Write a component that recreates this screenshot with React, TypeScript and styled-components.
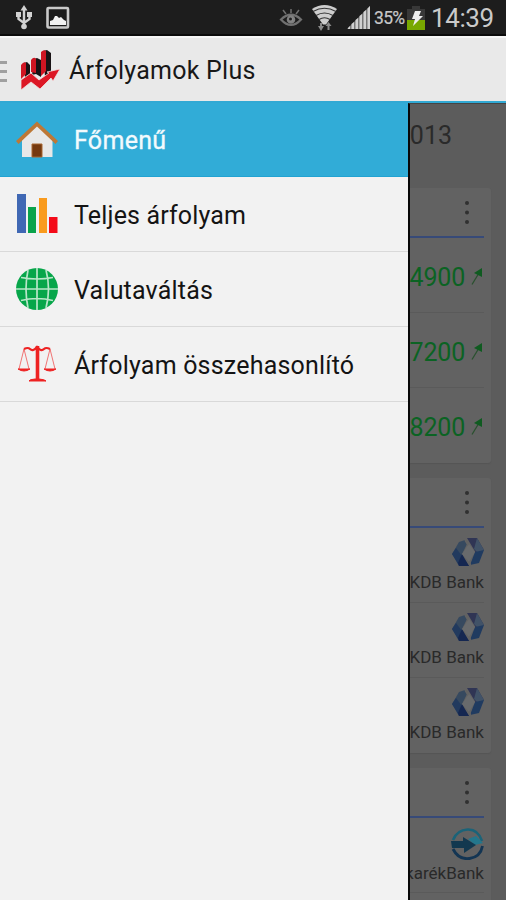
import React from "react";
import styled, { createGlobalStyle } from "styled-components";

const GlobalStyle = createGlobalStyle`
  body { margin: 0; background: #f2f2f2; font-family: Roboto, sans-serif; }
  *, *::before, *::after { box-sizing: border-box; }
  svg { display: block; flex: none; }
`;

const Screen = styled.div`
  width: 506px;
  height: 900px;
  display: flex;
  flex-direction: column;
  overflow: hidden;
`;

const StatusBar = styled.header`
  height: 36px;
  flex: none;
  display: flex;
  align-items: center;
  justify-content: space-between;
  padding: 0 12px 0 15px;
  background: #1d1d1d;
  border-bottom: 2px solid #0b0b0b;
`;

const StatusGroup = styled.div`
  display: flex;
  align-items: center;
  height: 34px;
  padding-top: 2px;
`;

const Gap = styled.span<{ $w: number }>`
  width: ${(p) => p.$w}px;
  flex: none;
`;

const Battery = styled.span`
  width: 31px;
  font-size: 17.5px;
  letter-spacing: -0.7px;
  color: #c8c8c8;
  -webkit-text-stroke: 0.2px #c8c8c8;
  line-height: 34px;
  white-space: nowrap;
`;

const Clock = styled.span`
  width: 63px;
  font-size: 26px;
  letter-spacing: -0.4px;
  color: #cacaca;
  line-height: 34px;
  white-space: nowrap;
`;

const ActionBar = styled.div`
  height: 65px;
  flex: none;
  display: flex;
  align-items: center;
  background: #e9e9e9;
  border-top: 2px solid #f6f6f6;
`;

const Handle = styled.div`
  width: 7px;
  height: 21px;
  display: flex;
  flex-direction: column;
  justify-content: space-between;
  margin: 3px 14px 0 0;
`;

const HandleLine = styled.span`
  height: 3px;
  background: #a0a0a0;
`;

const Title = styled.h1`
  margin: 2px 0 0 8px;
  font-size: 25px;
  font-weight: 400;
  letter-spacing: 0.25px;
  line-height: 32px;
  color: #181818;
`;

const Body = styled.div`
  flex: 1;
  display: flex;
  min-height: 0;
  border-top: 2px solid #31a9d4;
`;

const Drawer = styled.nav`
  width: 408px;
  flex: none;
  background: #f2f2f2;
`;

const MenuItem = styled.div<{ $active?: boolean }>`
  height: ${(p) => (p.$active ? 74 : 75)}px;
  display: flex;
  align-items: center;
  padding: 0 16px;
  border-bottom: ${(p) => (p.$active ? "1px solid #22a3d2" : "1px solid #d9d9d9")};
  background: ${(p) => (p.$active ? "#31acd7" : "transparent")};
  color: ${(p) => (p.$active ? "#f3fafd" : "#141414")};
  -webkit-text-stroke: ${(p) => (p.$active ? "0.3px #f3fafd" : "0")};
  font-size: 25px;
  line-height: 32px;
`;

const MenuLabel = styled.span<{ $spacing: number }>`
  margin: 3px 0 0 16px;
  letter-spacing: ${(p) => p.$spacing}px;
`;

const Content = styled.main`
  flex: 1;
  overflow: hidden;
  background: #5c5c5c;
  border-left: 2px solid #080808;
  border-top: 1px solid #454545;
`;

const DateLine = styled.div`
  height: 84px;
  padding: 16px 54px 0 0;
  display: flex;
  justify-content: flex-end;
  font-size: 25px;
  line-height: 32px;
  color: #2a2a2a;
`;

const Card = styled.section`
  width: 81px;
  margin-bottom: 15px;
  padding-right: 7px;
  background: #626262;
  border-radius: 0 3px 3px 0;
  box-shadow: 0 1px 1px #555555;
`;

const CardHeader = styled.div`
  height: 50px;
  display: flex;
  justify-content: flex-end;
  padding: 12px 15px 0 0;
  border-bottom: 2px solid #374a78;
`;

const CardRow = styled.div`
  height: 75px;
  display: flex;
  justify-content: flex-end;
  border-bottom: 1px solid #5a5a5a;
  &:last-child { border-bottom-color: transparent; }
`;

const Rate = styled.div`
  display: flex;
  align-items: center;
  gap: 6px;
  padding: 4px 1px 0 0;
  font-size: 25px;
  letter-spacing: -0.2px;
  color: #0b6323;
`;

const Bank = styled.div`
  flex: none;
  display: flex;
  flex-direction: column;
  align-items: flex-end;
  padding-top: 10px;
  font-size: 17px;
  line-height: 20px;
  color: #292929;
  white-space: nowrap;
`;

const BankName = styled.span<{ $top: number }>`
  margin-top: ${(p) => p.$top}px;
`;

const UsbIcon = () => (
  <svg width="18" height="26" viewBox="0 0 18 26" fill="none" stroke="#d2d2d2" strokeWidth="2.400">
    <path d="M9 3v19M3.500 9v5l5.500 4 5.500-4V9" />
    <path d="M9 0l3.500 5.500h-7z" fill="#d2d2d2" stroke="none" />
    <circle cx="9" cy="21.500" r="2.800" fill="#d2d2d2" stroke="none" />
    <path d="M1 7h5v5H1zM12 7h5v5h-5z" fill="#d2d2d2" stroke="none" />
  </svg>
);

const PictureIcon = () => (
  <svg width="24" height="24" viewBox="0 0 24 24">
    <rect x="1.500" y="2" width="20.500" height="19.500" rx="1" fill="#1b1b1b" stroke="#c9c9c9" strokeWidth="2.600" />
    <path d="M4 19v-4l3-1 2-4h2l2 2 2-1 3 3 2 1v4z" fill="#f2f2f2" />
  </svg>
);

const EyeIcon = () => (
  <svg width="24" height="20" viewBox="0 0 24 20" fill="none" stroke="#707070" strokeWidth="2.200">
    <path d="M2 11.500q10-9.500 20 0q-10 11-20 0z" />
    <circle cx="12" cy="11.500" r="3.200" fill="#8b8b8b" stroke="#808080" />
    <path d="M12 1v4M4 2l3 4M20 2l-3 4" strokeWidth="1.500" />
    <circle cx="11.500" cy="11" r="1.500" fill="#222" stroke="none" />
  </svg>
);

const WifiIcon = () => (
  <svg width="25" height="27" viewBox="0 0 25 27" fill="none">
    <path d="M0 4q12.500-8 25 0L14 19.500h-3z" fill="#cecece" />
    <path d="M1 6.500q11.500-6.500 23 0M4 10.500q8.500-5 17 0M7 14.500q5.500-3.500 11 0" stroke="#353535" strokeWidth="1.100" />
    <path d="M9 18v6M16.500 25v-6" stroke="#8a8a8a" strokeWidth="2" />
    <path d="M6 21h6l-3 5zM13.500 21h6l-3-4z" fill="#8a8a8a" />
  </svg>
);

const SignalIcon = () => (
  <svg width="24" height="24" viewBox="0 0 24 24">
    <path d="M0 23L23 0v23z" fill="#777" />
    <path d="M1 23v-1l2-2v3zM4.500 23v-5l2.500-2v7zM8.500 23v-9l2.500-2v11zM12.500 23V10l2.500-2v15zM16.500 23V6L19 4v19zM20.500 23V2.500L23 0v23z" fill="#d0d0d0" />
  </svg>
);

const BatteryIcon = () => (
  <svg width="18" height="26" viewBox="0 0 18 26">
    <path d="M5 1h8v3h5v21H0V4h5z" fill="#383838" />
    <path d="M0 15h18v10H0z" fill="#78a800" />
    <path d="M8 6h6l-2 5h4L6 21l2-7H5z" fill="#eee" />
  </svg>
);

const LogoIcon = () => (
  <svg width="40" height="40" viewBox="0 0 40 40">
    <path d="M3 13l3-1 3 3v9l-5 4zM13 9l3-1 4 2v17l-5-3-4 1zM22 1l4-1 4 3v20l-6 4z" fill="#191315" />
    <path d="M0 15q3-4 5-2v11l-5 5zM10 10q3-4 5-1v14l-5-1zM20 2q3-3 5-1v20l-5 5z" fill="#cf1522" />
    <path d="M0 30l10-7 8 7 10-7-2-1 13-3-7 12-2-3-11 11-9-7-10 8z" fill="#dc1725" stroke="#f1dfe0" strokeWidth=".8" />
  </svg>
);

const HomeIcon = () => (
  <svg width="42" height="42" viewBox="0 0 42 42">
    <path d="M6 21L21 6l15.500 15v17H6z" fill="#e8e8e8" />
    <path d="M0 22L21 2.500 42 22l-2.500 3L21 7.500 2.500 25z" fill="#bd7836" />
    <path d="M16 25h10v13H16z" fill="#75390f" stroke="#a86630" />
  </svg>
);

const BarsIcon = () => (
  <svg width="42" height="42" viewBox="0 0 42 42">
    <path d="M1 1h9v39H1z" fill="#4068b4" />
    <path d="M12 14h8v26h-8z" fill="#09a34b" />
    <path d="M23 5h8v35h-8z" fill="#f99b1e" />
    <path d="M33 24h8.500v16H33z" fill="#f40b19" />
  </svg>
);

const GlobeIcon = () => (
  <svg width="42" height="44" viewBox="0 0 42 44" fill="none" stroke="#b9e6c9" strokeWidth="1.700">
    <circle cx="21" cy="22" r="21" fill="#07a64a" stroke="none" />
    <path d="M21 1v42M0 22h42M5 10.500q16 3 32 0M5 33.500q16-4 32 0M12 3q-4 19 0 38M30 3q5 19 0 38" />
  </svg>
);

const ScalesIcon = () => (
  <svg width="42" height="38" viewBox="0 0 42 38" fill="none" stroke="#ee2222">
    <path d="M8 4q4-2 6 0q3 3 7-2q4 5 7 2q2-2 6 0" strokeWidth="2.200" />
    <path d="M21.500 1v34" strokeWidth="3.600" />
    <path d="M8 4L3 24M8 4l5 20M34 4l-5 20M34 4l5 20" strokeWidth="1" opacity=".6" />
    <path d="M2 24h12q-6 4-12 0zM28 24h12q-6 4-12 0zM13 36q0-1.500 6-2h4q6 .5 7 2z" fill="#ee2222" strokeWidth="1" />
  </svg>
);

const MoreIcon = () => (
  <svg width="4" height="25" viewBox="0 0 4 25" fill="#303030">
    <circle cx="2" cy="3" r="2" />
    <circle cx="2" cy="12.500" r="2" />
    <circle cx="2" cy="22" r="2" />
  </svg>
);

const UpArrow = () => (
  <svg width="12" height="18" viewBox="0 0 12 18">
    <path d="M1 16.500L8 5" stroke="#2a512f" strokeWidth="1.300" />
    <path d="M11 0v9L3 5z" fill="#0f5b20" />
  </svg>
);

const KdbIcon = () => (
  <svg width="32" height="29" viewBox="0 0 32 29">
    <path d="M0 16L7 4l6-2 2 4-5 10 2 5-6 4z" fill="#36495f" />
    <path d="M0 16l4-6 6 8 7 10H7z" fill="#223a5e" />
    <path d="M6 25l4-9 7 12H7z" fill="#152751" />
    <path d="M15 0h10l7 12-8 3z" fill="#303554" />
    <path d="M25 0l7 12-5 4-5-5z" fill="#415267" />
    <path d="M23 14l9-2-5 13-9 2z" fill="#203b60" />
    <path d="M17 6l6 8-6 10-7-8z" fill="#686a6c" />
    <path d="M13 2l3 5M17.500 23l1 5" stroke="#626262" strokeWidth="1.500" />
  </svg>
);

const SavingsIcon = () => (
  <svg width="33" height="32" viewBox="0 0 33 32" fill="none">
    <path d="M2 12Q6 2 16.500 1.500T31 13" stroke="#1b6378" strokeWidth="2.600" />
    <path d="M31.500 18q-2 11-13 12.500T2 21" stroke="#133553" strokeWidth="2.800" />
    <path d="M17 11l8-3 7 7-8 2z" fill="#23778c" />
    <path d="M0 13h12V9l13 8-12 8v-5H1z" fill="#12384f" />
  </svg>
);

const menu = [
  { label: "Főmenű", icon: <HomeIcon />, active: true, spacing: 0.3 },
  { label: "Teljes árfolyam", icon: <BarsIcon />, active: false, spacing: 0.15 },
  { label: "Valutaváltás", icon: <GlobeIcon />, active: false, spacing: 0.2 },
  { label: "Árfolyam összehasonlító", icon: <ScalesIcon />, active: false, spacing: 0.2 },
];

const BankEntry = ({ name, logo, top }: { name: string; logo: React.ReactNode; top: number }) => (
  <CardRow>
    <Bank>
      {logo}
      <BankName $top={top}>{name}</BankName>
    </Bank>
  </CardRow>
);

export default function App() {
  return (
    <Screen>
      <GlobalStyle />
      <StatusBar>
        <StatusGroup>
          <UsbIcon />
          <Gap $w={13} />
          <PictureIcon />
        </StatusGroup>
        <StatusGroup>
          <EyeIcon />
          <Gap $w={9} />
          <WifiIcon />
          <Gap $w={10} />
          <SignalIcon />
          <Gap $w={3} />
          <Battery>35%</Battery>
          <Gap $w={2} />
          <BatteryIcon />
          <Gap $w={6} />
          <Clock>14:39</Clock>
        </StatusGroup>
      </StatusBar>
      <ActionBar>
        <Handle>
          <HandleLine />
          <HandleLine />
          <HandleLine />
        </Handle>
        <LogoIcon />
        <Title>Árfolyamok Plus</Title>
      </ActionBar>
      <Body>
        <Drawer>
          {menu.map((m) => (
            <MenuItem key={m.label} $active={m.active}>
              {m.icon}
              <MenuLabel $spacing={m.spacing}>{m.label}</MenuLabel>
            </MenuItem>
          ))}
        </Drawer>
        <Content>
          <DateLine>013</DateLine>
          <Card>
            <CardHeader><MoreIcon /></CardHeader>
            {["4900", "7200", "8200"].map((rate) => (
              <CardRow key={rate}>
                <Rate>{rate}<UpArrow /></Rate>
              </CardRow>
            ))}
          </Card>
          <Card>
            <CardHeader><MoreIcon /></CardHeader>
            <BankEntry name="KDB Bank" logo={<KdbIcon />} top={5} />
            <BankEntry name="KDB Bank" logo={<KdbIcon />} top={5} />
            <BankEntry name="KDB Bank" logo={<KdbIcon />} top={5} />
          </Card>
          <Card>
            <CardHeader><MoreIcon /></CardHeader>
            <BankEntry name="karékBank" logo={<SavingsIcon />} top={3} />
            <CardRow />
          </Card>
        </Content>
      </Body>
    </Screen>
  );
}
